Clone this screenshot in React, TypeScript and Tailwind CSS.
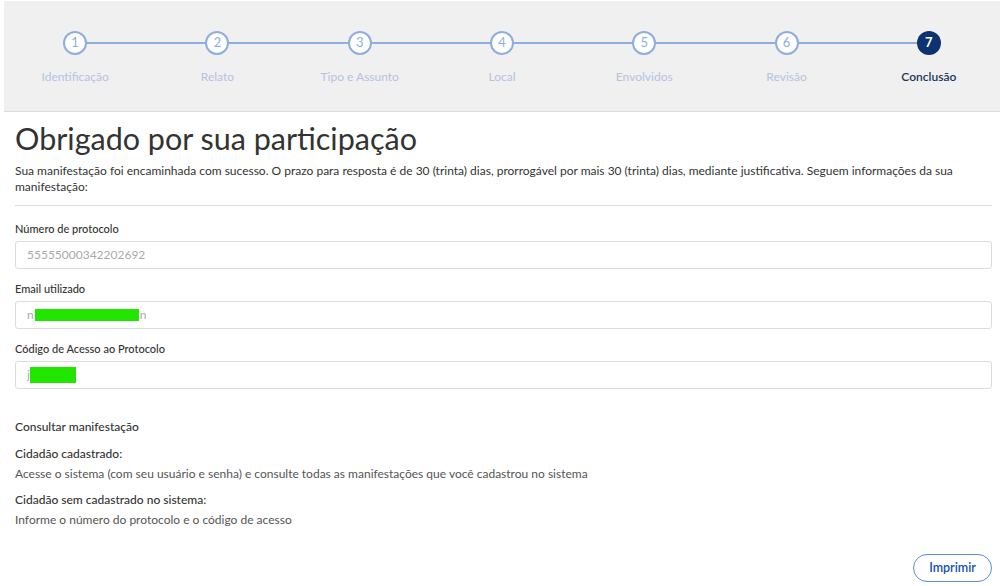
const steps = ["Identificação", "Relato", "Tipo e Assunto", "Local", "Envolvidos", "Revisão", "Conclusão"]

function Stepper() {
  return (
    <div className="ml-[4px] mt-[1px] h-[111px] bg-[#f0f0f0] border-b border-[#dcdcdc] flex">
      {steps.map((label, i) => {
        const active = i === steps.length - 1
        return (
          <div key={label} className="flex-1 flex flex-col items-center">
            <div className="relative w-full h-[24px] mt-[30px] flex justify-center">
              {i < steps.length - 1 && (
                <div className="absolute top-[11px] left-1/2 w-full h-[2px] bg-[#8eaee0]" />
              )}
              {active ? (
                <div className="relative z-10 w-[24px] h-[24px] rounded-full bg-[#0c326f] text-white text-[13px] font-bold flex items-center justify-center">
                  {i + 1}
                </div>
              ) : (
                <div className="relative z-10 w-[24px] h-[24px] rounded-full bg-white border-2 border-[#8eaee0] text-[#8eaee0] text-[13px] flex items-center justify-center">
                  {i + 1}
                </div>
              )}
            </div>
            <div
              className={
                active
                  ? "mt-[13px] text-[12px] font-semibold text-[#1b365f]"
                  : "mt-[13px] text-[12px] text-[#b4c3e0]"
              }
            >
              {label}
            </div>
          </div>
        )
      })}
    </div>
  )
}

function Field({ label, children }: { label: string; children: React.ReactNode }) {
  return (
    <div>
      <div className="text-[11px] font-medium text-[#333] h-[16px] leading-[16px]">{label}</div>
      <div className="h-[28px] mt-[4px] border border-[#dcdcdc] rounded-[3px] bg-white px-[11px] flex items-center text-[12px] text-[#aaa]">
        {children}
      </div>
    </div>
  )
}

export default function App() {
  return (
    <div className="w-[1000px] h-[586px] bg-white overflow-hidden font-['Lato','Open_Sans',sans-serif] text-[#333]">
      <Stepper />
      <div className="pl-[15px] pr-[8px]">
        <h1 className="mt-[6px] text-[30.5px] leading-[40px] text-[#333]">Obrigado por sua participação</h1>
        <p className="mt-[5px] text-[12px] leading-[16px] text-[#333]">
          Sua manifestação foi encaminhada com sucesso. O prazo para resposta é de 30 (trinta) dias, prorrogável por mais 30 (trinta) dias, mediante justificativa. Seguem informações da sua manifestação:
        </p>
        <div className="mt-[10px] border-t border-[#dcdcdc]" />
        <div className="mt-[15px] flex flex-col gap-[12px]">
          <Field label="Número de protocolo">55555000342202692</Field>
          <Field label="Email utilizado">
            <span>n</span>
            <span className="inline-block w-[104px] h-[12px] bg-[#22e600] mx-[1px]" />
            <span>n</span>
          </Field>
          <Field label="Código de Acesso ao Protocolo">
            <span>j</span>
            <span className="inline-block w-[46px] h-[16px] bg-[#22e600]" />
          </Field>
        </div>
        <div className="mt-[29px] text-[12px] font-medium text-[#333] leading-[18px]">Consultar manifestação</div>
        <div className="mt-[9px] text-[12px] font-medium text-[#333] leading-[18px]">Cidadão cadastrado:</div>
        <div className="mt-[2px] text-[12px] text-[#555] leading-[18px]">
          Acesse o sistema (com seu usuário e senha) e consulte todas as manifestações que você cadastrou no sistema
        </div>
        <div className="mt-[8px] text-[12px] font-medium text-[#333] leading-[18px]">Cidadão sem cadastrado no sistema:</div>
        <div className="mt-[2px] text-[12px] text-[#555] leading-[18px]">Informe o número do protocolo e o código de acesso</div>
        <div className="flex justify-end mt-[25px]">
          <button className="w-[79px] h-[28px] rounded-full border border-[#5b8bd6] text-[#1351b4] text-[12.5px] font-semibold bg-white">
            Imprimir
          </button>
        </div>
      </div>
    </div>
  )
}
